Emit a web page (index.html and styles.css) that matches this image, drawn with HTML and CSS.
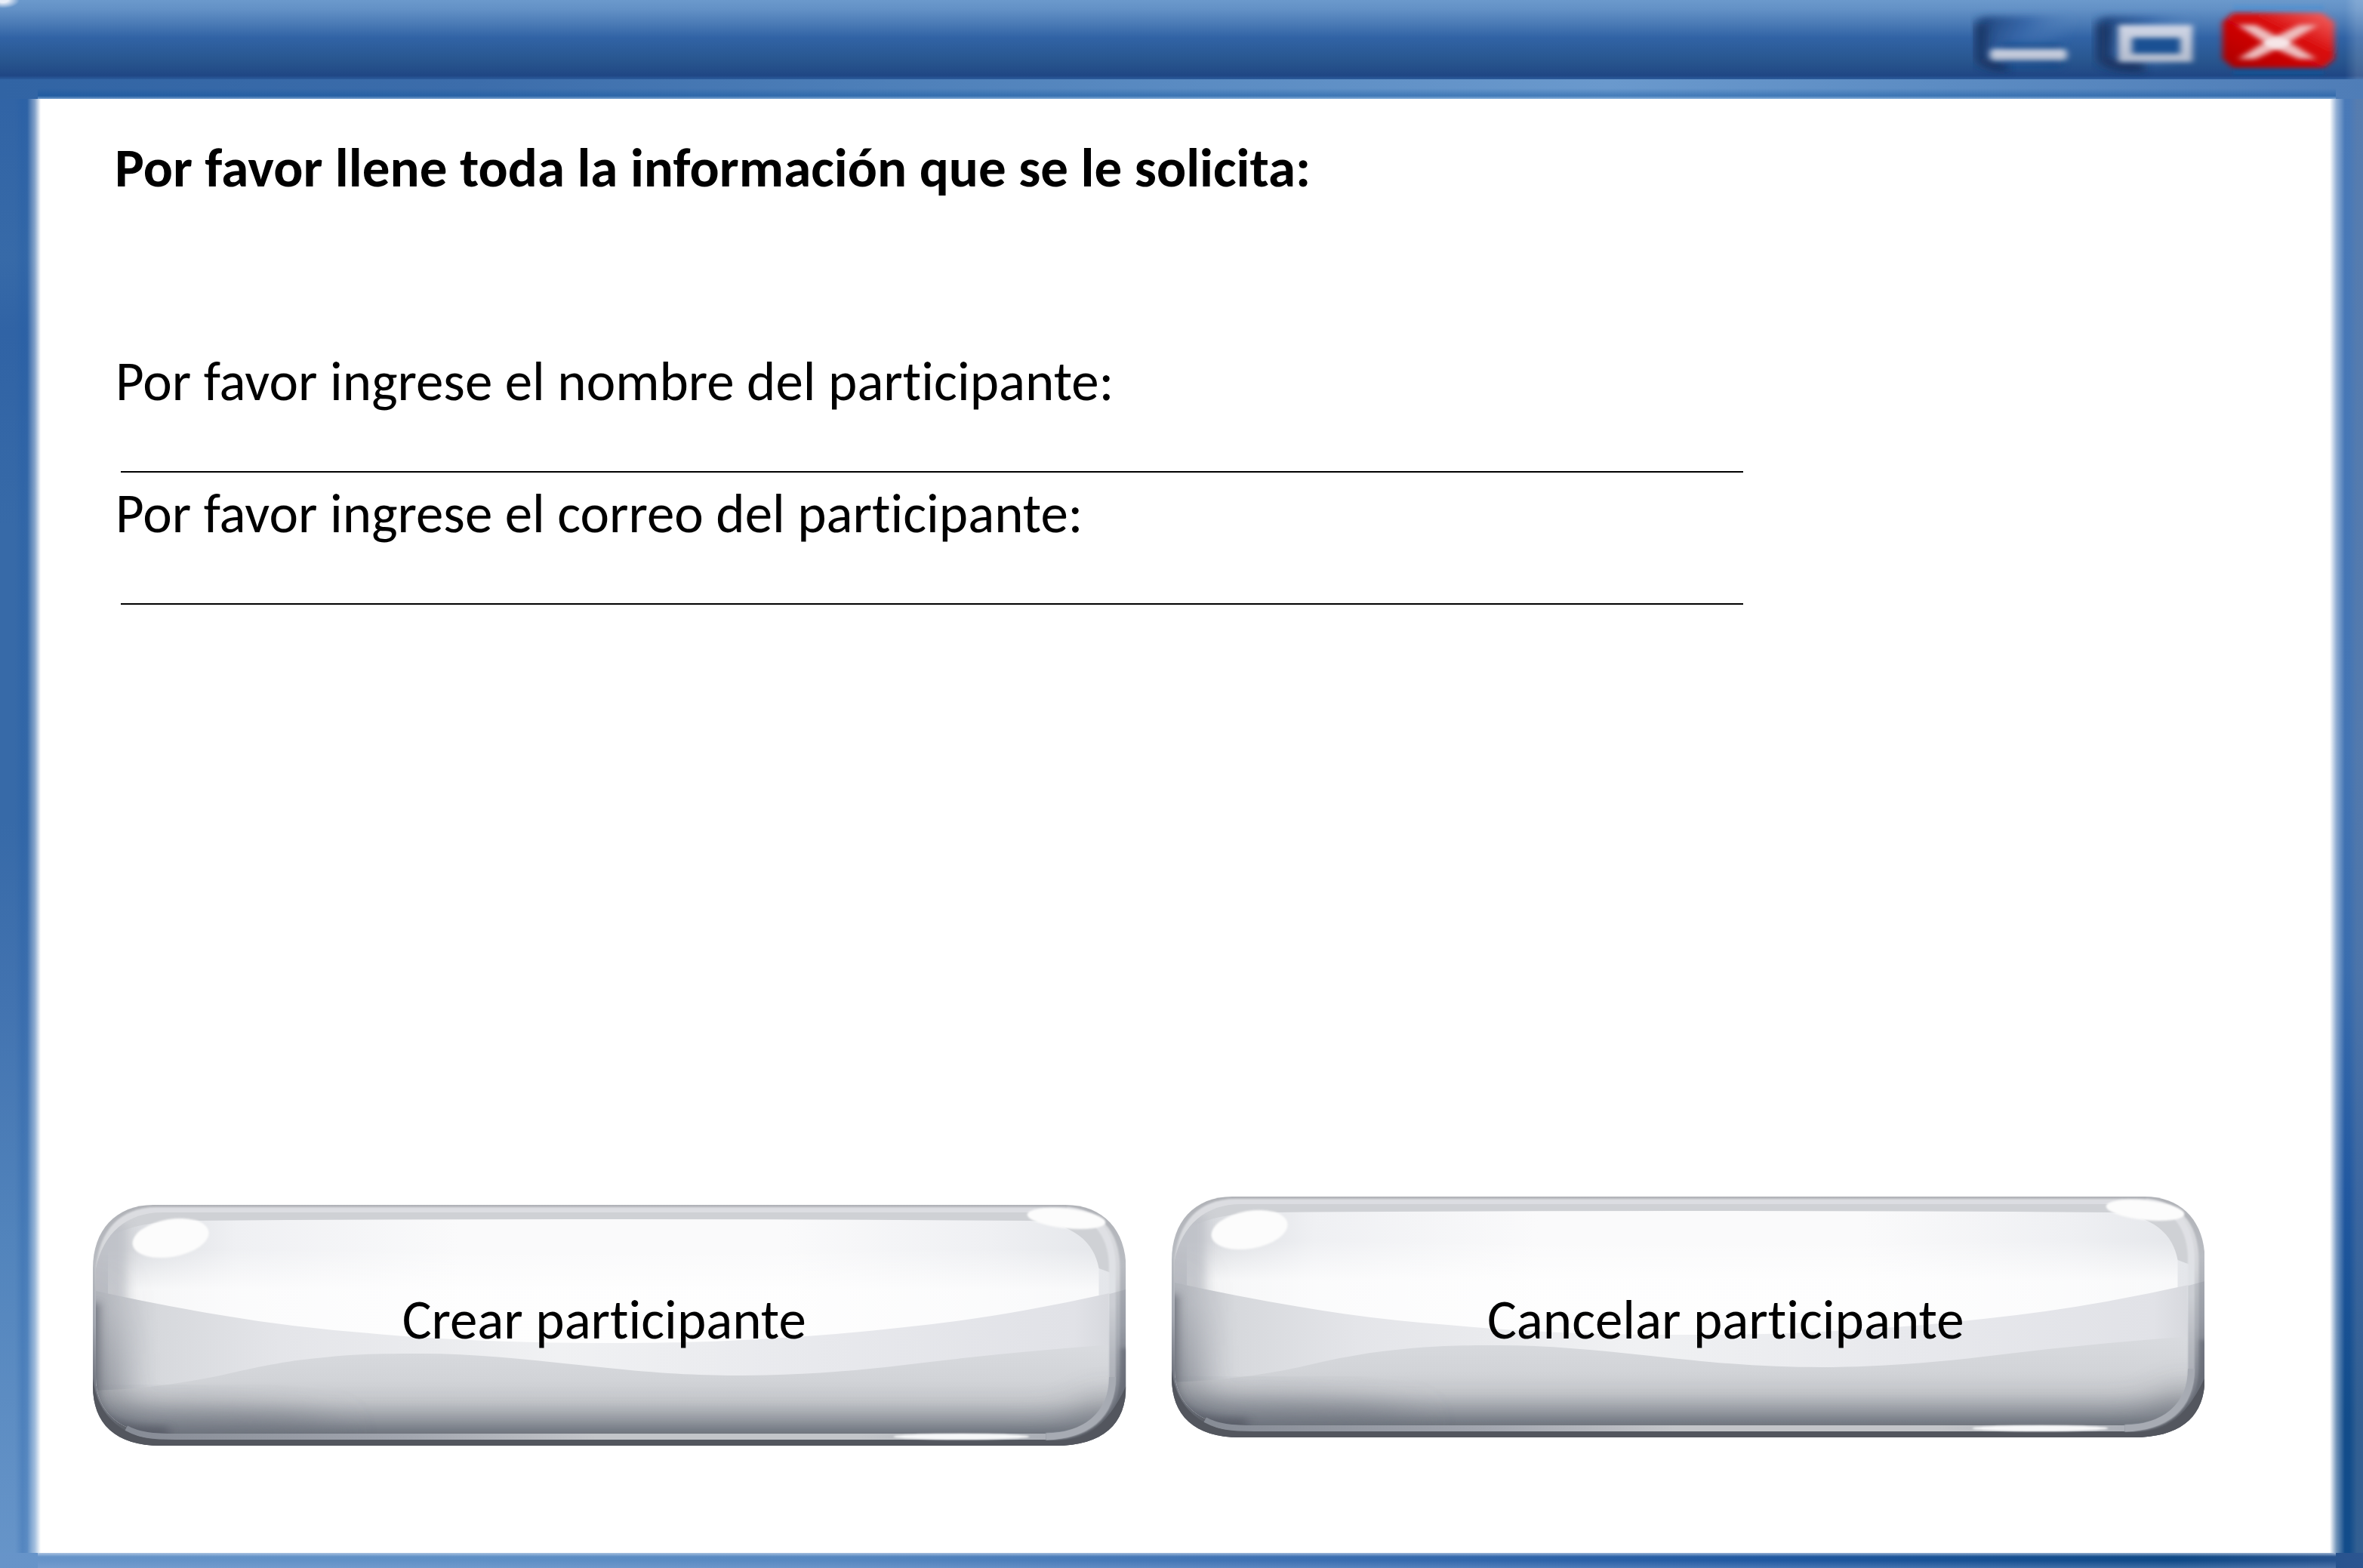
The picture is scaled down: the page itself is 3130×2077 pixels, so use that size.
FILE: index.html
```html
<!DOCTYPE html>
<html lang="es">
<head>
<meta charset="utf-8">
<meta name="viewport" content="width=device-width, initial-scale=1">
<title>Crear participante</title>
<link rel="stylesheet" href="styles.css">
</head>
<body>
<svg class="defs" aria-hidden="true">
  <defs>
    <filter id="soft3" x="-20%" y="-60%" width="140%" height="220%"><feGaussianBlur stdDeviation="4 3"/></filter>
    <filter id="soft2" x="-20%" y="-60%" width="140%" height="220%"><feGaussianBlur stdDeviation="2.5"/></filter>
    <filter id="soft1" x="-20%" y="-60%" width="140%" height="220%"><feGaussianBlur stdDeviation="1"/></filter>
    <filter id="soft8" x="-30%" y="-60%" width="160%" height="220%"><feGaussianBlur stdDeviation="7 5"/></filter>
    <filter id="shade" x="-20%" y="-40%" width="140%" height="180%"><feGaussianBlur stdDeviation="30 22"/></filter>
    <linearGradient id="keyFace" x1="0" y1="0" x2="1" y2="0.25">
      <stop offset="0" stop-color="#1f4379"/><stop offset="0.5" stop-color="#3666a8"/><stop offset="1" stop-color="#5484bf" stop-opacity="0"/>
    </linearGradient>
    <linearGradient id="red" x1="0" y1="1" x2="1" y2="0">
      <stop offset="0" stop-color="#a80004"/><stop offset="0.3" stop-color="#c40002"/><stop offset="0.6" stop-color="#d90c0c"/><stop offset="1" stop-color="#f56a68"/>
    </linearGradient>
    <linearGradient id="silver" x1="0" y1="0" x2="0" y2="1">
      <stop offset="0" stop-color="#d0d6e6"/><stop offset="1" stop-color="#b4bccd"/>
    </linearGradient>

    <linearGradient id="panel" x1="0" y1="0" x2="1" y2="0">
      <stop offset="0" stop-color="#c9cbd0"/><stop offset="0.06" stop-color="#dfe1e5"/><stop offset="0.14" stop-color="#eff0f3"/><stop offset="0.36" stop-color="#fafafb"/>
      <stop offset="0.68" stop-color="#fafafb"/><stop offset="0.88" stop-color="#eff0f3"/><stop offset="1" stop-color="#e4e6ea"/>
    </linearGradient>
    <linearGradient id="panelGlow" x1="0" y1="0" x2="0" y2="1">
      <stop offset="0" stop-color="#fff" stop-opacity="0"/><stop offset="0.18" stop-color="#fff" stop-opacity="0"/><stop offset="0.42" stop-color="#fff" stop-opacity="0.75"/>
    </linearGradient>
    <linearGradient id="wave1" x1="0" y1="0" x2="1" y2="0">
      <stop offset="0" stop-color="#b4b7be"/><stop offset="0.06" stop-color="#d6d8dc"/><stop offset="0.18" stop-color="#e4e5e9"/><stop offset="0.45" stop-color="#f0f1f3"/>
      <stop offset="0.7" stop-color="#e8e9ed"/><stop offset="0.95" stop-color="#e1e2e7"/><stop offset="1" stop-color="#d2d4d9"/>
    </linearGradient>
    <linearGradient id="wave2" gradientUnits="userSpaceOnUse" x1="0" y1="190" x2="0" y2="305">
      <stop offset="0" stop-color="#d8dade"/><stop offset="0.35" stop-color="#d2d4d8"/><stop offset="0.6" stop-color="#c8cace"/><stop offset="0.85" stop-color="#b0b4bb"/><stop offset="1" stop-color="#949aa3"/>
    </linearGradient>
    <linearGradient id="fade" x1="0" y1="0" x2="0" y2="1">
      <stop offset="0.2" stop-color="#000"/><stop offset="0.45" stop-color="#333"/><stop offset="0.75" stop-color="#bbb"/><stop offset="1" stop-color="#fff"/>
    </linearGradient>
    <linearGradient id="rimRight" gradientUnits="userSpaceOnUse" x1="0" y1="20" x2="0" y2="300">
      <stop offset="0" stop-color="#dfe0e4"/><stop offset="0.4" stop-color="#e0e2e6"/><stop offset="0.65" stop-color="#c3c6cc"/><stop offset="1" stop-color="#a7abb3"/>
    </linearGradient>
    <linearGradient id="rimBottom" gradientUnits="userSpaceOnUse" x1="40" y1="0" x2="1290" y2="0">
      <stop offset="0" stop-color="#868b95"/><stop offset="0.3" stop-color="#a2a6af"/><stop offset="0.5" stop-color="#c3c5c9"/><stop offset="0.78" stop-color="#c3c5c9"/><stop offset="1" stop-color="#a9adb5"/>
    </linearGradient>
    <linearGradient id="edge" x1="0" y1="0" x2="0" y2="1">
      <stop offset="0" stop-color="#b0b2b7"/><stop offset="0.25" stop-color="#b9bcc2"/><stop offset="0.5" stop-color="#a0a4ad"/><stop offset="0.75" stop-color="#6d717b"/><stop offset="1" stop-color="#53575f"/>
    </linearGradient>
    <linearGradient id="lip" x1="0" y1="0" x2="0" y2="1">
      <stop offset="0" stop-color="#dddee2"/><stop offset="0.3" stop-color="#d2d4d8"/><stop offset="0.55" stop-color="#b3b7be"/><stop offset="0.8" stop-color="#7d818b"/><stop offset="1" stop-color="#53575f"/>
    </linearGradient>
    <clipPath id="glassShape"><path d="M80 0H1288C1338 0 1368 34 1368 84V240C1368 290 1338 319 1274 319H90C30 319 0 290 0 240V84C0 34 30 0 80 0Z"/></clipPath>
    <clipPath id="innerShape"><path d="M92 10H1270C1322 10 1348 38 1348 84V228C1348 276 1316 303 1264 303H90C38 303 4 276 4 228V84C14 38 44 10 92 10Z"/></clipPath>
    <mask id="lower"><rect width="1368" height="319" fill="url(#fade)"/></mask>

    <symbol id="glass" viewBox="0 0 1368 319" preserveAspectRatio="none">
      <g clip-path="url(#glassShape)">
        <rect width="1368" height="319" fill="url(#edge)"/>
        <path d="M84 3H1284C1332 3 1360 34 1360 84V228C1358 286 1320 311 1262 311H92C38 308 4 280 4 236V84C8 34 36 3 84 3Z" fill="url(#lip)" filter="url(#soft1)"/>
        <g clip-path="url(#innerShape)">
          <rect width="1368" height="319" fill="#cfd1d5"/>
          <path d="M0 60C30 30 70 22 130 21Q680 17 1240 21C1300 24 1326 50 1332 84L1348 90V240H0Z" fill="url(#panel)"/>
          <path d="M20 60C60 40 100 24 130 21Q680 17 1240 21C1300 24 1326 50 1332 84V240H20Z" fill="url(#panelGlow)"/>
          <rect x="-10" y="24" width="55" height="230" fill="#b9bcc3" opacity="0.7" filter="url(#soft8)"/>
        </g>
        <path d="M0 113Q80 131 169 146Q262 162 366 170C460 179 570 183 676 183C750 183 810 182 860 179Q970 174 1075 162Q1160 153 1232 140Q1300 128 1368 112V303H0Z" fill="url(#wave1)" clip-path="url(#innerShape)"/>
        <path d="M0 246C60 244 110 238 169 226C220 214 255 207 297 203C350 197 390 197 435 197C520 197 600 208 692 217C760 224 810 226 860 226C930 226 1010 220 1075 212Q1220 194 1368 184V303H0Z" fill="url(#wave2)" clip-path="url(#innerShape)"/>
        <g clip-path="url(#innerShape)">
          <g mask="url(#lower)">
            <path d="M0 -40V240C0 290 30 312 90 312H1264C1310 312 1350 290 1356 260" fill="none" stroke="#4c515c" stroke-width="46" opacity="0.8" filter="url(#shade)"/>
            <ellipse cx="60" cy="300" rx="260" ry="34" fill="#6a6f7a" opacity="0.55" filter="url(#shade)"/>
          </g>
          <path d="M-4 130V250C0 290 30 305 100 305" fill="none" stroke="#555963" stroke-width="22" opacity="0.75" filter="url(#soft8)"/>
          <path d="M80 304H1260" stroke="#6f747e" stroke-width="5" filter="url(#soft2)"/>
        </g>
        <path d="M1290 8C1332 12 1350 44 1350 84V228C1350 280 1316 307 1262 307" fill="none" stroke="url(#rimRight)" stroke-width="9" filter="url(#soft1)"/>
        <path d="M1366 190V240C1364 292 1328 317 1262 317" fill="none" stroke="#5f646e" stroke-width="10" opacity="0.6" filter="url(#soft2)"/>
        <path d="M1368 112L1346 118V303H1368Z" fill="#7e828d" opacity="0.2"/>
        <path d="M44 296C60 305 80 307 110 307H1262" fill="none" stroke="url(#rimBottom)" stroke-width="8"/>
        <path d="M0 230C6 280 40 312 100 312H1274C1310 312 1340 300 1368 240V319H0Z" fill="#53565e"/>
        <path d="M1262 307C1312 306 1350 280 1350 228" fill="none" stroke="#a7abb3" stroke-width="9"/>
        <ellipse cx="1150" cy="307" rx="90" ry="4" fill="#f7f8f9" filter="url(#soft1)"/>
      </g>
      <ellipse cx="103" cy="44" rx="51" ry="25" transform="rotate(-10 103 44)" fill="#fcfcfc" filter="url(#soft1)"/>
      <ellipse cx="1289" cy="18" rx="52" ry="13" transform="rotate(6 1289 18)" fill="#fcfcfc" filter="url(#soft1)"/>
    </symbol>
  </defs>
</svg>

<div class="window">
  <header class="titlebar">
    <button class="control" type="button" aria-label="Minimizar">
      <svg viewBox="0 0 150 105">
        <rect x="8" y="22" width="128" height="64" rx="10" fill="url(#keyFace)" filter="url(#soft8)"/>
        <path d="M14 32V78Q20 88 50 88" fill="none" stroke="#122c55" stroke-width="14" opacity="0.75" filter="url(#soft8)"/>
        <rect x="40" y="58" width="80" height="30" fill="#0d4384" opacity="0.7" filter="url(#soft8)"/>
        <rect x="26" y="65" width="102" height="15" rx="5" fill="url(#silver)" filter="url(#soft3)"/>
      </svg>
    </button>
    <button class="control" type="button" aria-label="Maximizar">
      <svg viewBox="0 0 150 105">
        <rect x="8" y="22" width="130" height="64" rx="10" fill="url(#keyFace)" filter="url(#soft8)"/>
        <path d="M16 32V78Q22 88 70 88" fill="none" stroke="#122c55" stroke-width="16" opacity="0.75" filter="url(#soft8)"/>
        <rect x="46" y="42" width="80" height="34" fill="#1a5093"/>
        <path fill-rule="evenodd" d="M36 33H134V82H36ZM54 50V71H118V50Z" fill="url(#silver)" filter="url(#soft3)"/>
      </svg>
    </button>
    <button class="control control-close" type="button" aria-label="Cerrar">
      <svg viewBox="0 0 170 105">
        <rect x="28" y="7" width="120" height="10" fill="#4f93d3" opacity="0.7" filter="url(#soft2)"/>
        <rect x="28" y="88" width="120" height="10" fill="#0b5597" filter="url(#soft2)"/>
        <path d="M28 17H146L162 29V78L148 90H28L14 78V29Z" fill="url(#red)" filter="url(#soft3)"/>
        <path d="M34 33H58L85 48L116 33H140L103 56L138 78H115L85 65L57 78H35L69 56Z" fill="#eebfc0" filter="url(#soft3)"/>
        <ellipse cx="86" cy="57" rx="16" ry="7" fill="#f6e6e8" filter="url(#soft2)"/>
      </svg>
    </button>
  </header>

  <main class="frame">
    <form class="client">
      <h1 class="heading">Por favor llene toda la información que se le solicita:</h1>
      <div class="fields">
        <div class="field">
          <label for="nombre">Por favor ingrese el nombre del participante:</label>
          <input id="nombre" name="nombre" type="text" autocomplete="off">
        </div>
        <div class="field">
          <label for="correo">Por favor ingrese el correo del participante:</label>
          <input id="correo" name="correo" type="email" autocomplete="off">
        </div>
      </div>
      <div class="actions">
        <button class="glass create" type="submit">
          <svg aria-hidden="true"><use href="#glass"/></svg>
          <span>Crear participante</span>
        </button>
        <button class="glass cancel" type="button">
          <svg aria-hidden="true"><use href="#glass"/></svg>
          <span>Cancelar participante</span>
        </button>
      </div>
    </form>
  </main>
</div>
</body>
</html>
```
FILE: styles.css
```css
* {
  box-sizing: border-box;
}

body {
  margin: 0;
  color: #000;
  font-family: Carlito, Calibri, Lato, sans-serif;
  font-size: 73px;
  line-height: 88px;
  font-variant-ligatures: none;
}

button,
input {
  margin: 0;
  padding: 0;
  border: 0;
  background: none;
  color: inherit;
  font: inherit;
  font-variant-ligatures: inherit;
}

.defs {
  position: absolute;
  width: 0;
  height: 0;
}

.window {
  display: flex;
  flex-direction: column;
  min-height: 100vh;
}

/* Title bar */

.titlebar {
  display: flex;
  justify-content: flex-end;
  gap: 10px;
  height: 105px;
  padding-right: 30px;
  background:
    radial-gradient(ellipse 22px 11px at 4px 0, #e8eef8 30%, transparent),
    linear-gradient(270deg, rgb(255 255 255 / 15%) 8px, transparent 24px),
    linear-gradient(#6b99cc, #6391c6 12px, #4a7ab5 32px, #3163a5 50px, #28568f 80px, #234c88 94px, #1f4684 100px, #2b5b9c);
}

.control {
  width: 150px;
  height: 105px;
}

.control-close {
  width: 170px;
}

.control svg {
  display: block;
  width: 100%;
  height: 100%;
}

/* Blue border with a white working area that fades into it at the sides */

.frame {
  display: flex;
  flex: 1;
  padding: 26px 36px 20px 50px;
  background:
    linear-gradient(90deg, transparent 36px, rgb(255 255 255 / 40%) 46px, #fff 54px, #fff calc(100% - 44px), rgb(255 255 255 / 40%) calc(100% - 35px), transparent calc(100% - 24px)) 0 26px / 100% calc(100% - 46px) no-repeat,
    linear-gradient(transparent 12px, rgb(10 80 155 / 40%) 22px, rgb(160 195 230 / 60%)) 50px 0 / calc(100% - 86px) 26px no-repeat,
    linear-gradient(rgb(200 215 235 / 70%), transparent 5px, transparent 10px, rgb(140 170 215 / 35%)) 50px 100% / calc(100% - 86px) 20px no-repeat,
    linear-gradient(90deg, #3164a4, #3c6dab 20%, #4c7eb8 36%, #5a8bc2 50%, #6a99cd 68%, #5c8cc3 82%, #4f7db7) 0 0 / 100% 26px no-repeat,
    linear-gradient(90deg, #6794c9, #5f90c6 20%, #5788c1 35%, #3d70b2 55%, #2159a1 75%, #104a87 92%, #2c5590) 0 100% / 100% 20px no-repeat,
    linear-gradient(90deg, transparent 20px, rgb(30 90 165 / 25%) 30px, transparent 44px) 0 0 / 54px 100% no-repeat,
    linear-gradient(270deg, rgb(110 130 160 / 35%) 8px, transparent 18px) 100% 0 / 54px 100% no-repeat,
    linear-gradient(#3063a5, #376aa8 12%, #3063a5 17%, #376aa8 30%, #376aa8 50%, #4273b0 62%, #5284bc 78%, #6795c9) 0 0 / 54px 100% no-repeat,
    linear-gradient(#4a7ab8, #4475b4 45%, #3a6dae 60%, #2158a0 75%, #124c8a 90%, #124c8a) 100% 0 / 54px 100% no-repeat,
    #fff;
}

.client {
  display: flex;
  flex: 1;
  flex-direction: column;
  padding: 47px 174px 142px 73px;
}

.heading {
  margin: 0;
  padding-left: 29px;
  font-size: inherit;
  line-height: inherit;
}

.fields {
  display: flex;
  flex-direction: column;
  gap: 10px;
  max-width: 2186px;
  margin-top: 195px;
  padding-left: 30px;
}

.field {
  display: flex;
  flex-direction: column;
}

.field input {
  height: 77px;
  margin-left: 7px;
  border-bottom: 2px solid #000;
  outline: none;
}

/* Glass buttons share one text baseline */

.actions {
  display: grid;
  grid-template-columns: 1fr 1fr;
  align-items: baseline;
  gap: 60px;
  margin-top: auto;
}

.glass {
  position: relative;
  text-align: center;
  cursor: pointer;
}

.glass svg {
  position: absolute;
  inset: 0;
  width: 100%;
  height: 100%;
}

.glass span {
  position: relative;
}

.create {
  padding: 108px 14px 123px 0;
}

.cancel {
  padding: 119px 0 112px 100px;
}
```
